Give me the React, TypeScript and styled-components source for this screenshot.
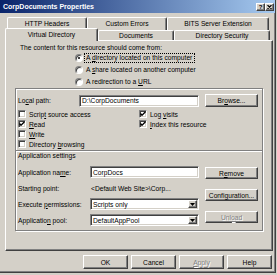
import React from "react";
import styled, { createGlobalStyle, css } from "styled-components";

const GlobalStyle = createGlobalStyle`
  html, body {
    margin: 0;
    padding: 0;
    background: #d4d0c8;
  }
  body {
    font-family: "Liberation Sans", Arial, sans-serif;
    font-size: 6.7px;
    color: #000;
  }
`;

const raised = css`
  border: 1px solid;
  border-color: #fff #404040 #404040 #fff;
  box-shadow: inset -1px -1px #808080;
`;

const sunken = css`
  border: 1px solid;
  border-color: #808080 #fff #fff #808080;
  box-shadow: inset 1px 1px #404040, inset -1px -1px #d4d0c8;
`;

const Window = styled.div`
  width: 276px;
  height: 273px;
  box-sizing: border-box;
  background: #d4d0c8;
  border-right: 1px solid #404040;
  border-bottom: 1px solid #404040;
  box-shadow: inset -1px -1px #808080;
  display: flex;
  flex-direction: column;
`;

const TitleBar = styled.div`
  height: 13px;
  flex: none;
  background: linear-gradient(to right, #0a246a, #a6caf0);
  display: flex;
  align-items: center;
  justify-content: space-between;
  padding: 0 1px 0 3px;
`;

const Title = styled.span`
  color: #fff;
  font-weight: bold;
  font-size: 7px;
`;

const CaptionButtons = styled.div`
  display: flex;
  margin-top: 1px;
`;

const CaptionButton = styled.div`
  width: 9px;
  height: 8px;
  box-sizing: border-box;
  background: #d4d0c8;
  ${raised};
  display: flex;
  align-items: center;
  justify-content: center;
  font-weight: bold;
  font-size: 6px;
  line-height: 6px;
`;

const Body = styled.div`
  display: flex;
  flex-direction: column;
  padding: 4px 2px 0 5px;
`;

const tabEdges = css`
  box-sizing: border-box;
  background: #d4d0c8;
  border-top: 1px solid #fff;
  border-left: 1px solid #fff;
  border-right: 1px solid #404040;
  box-shadow: inset -1px 0 #808080;
  border-radius: 2px 2px 0 0;
  display: flex;
  align-items: center;
  justify-content: center;
  white-space: nowrap;
`;

const BackRow = styled.div`
  display: flex;
  margin-left: 2px;
  height: 11px;
`;

const BackTab = styled.div<{ $w: number }>`
  ${tabEdges};
  width: ${(p) => p.$w}px;
  height: 13px;
  padding-bottom: 2px;
`;

const FrontRow = styled.div`
  display: flex;
  align-items: flex-start;
  height: 13px;
  margin-bottom: -1px;
`;

const FrontTab = styled.div<{ $w: number; $active?: boolean }>`
  ${tabEdges};
  width: ${(p) => p.$w}px;
  ${(p) =>
    p.$active
      ? css`
          height: 13px;
          position: relative;
          z-index: 1;
          padding-bottom: 1px;
        `
      : css`
          height: 10px;
          margin-top: 2px;
        `}
`;

const Panel = styled.div`
  box-sizing: border-box;
  height: 211px;
  border-top: 1px solid #fff;
  border-left: 1px solid #fff;
  border-right: 1px solid #404040;
  border-bottom: 1px solid #404040;
  box-shadow: inset -1px -1px #808080;
  padding: 2px 10px 0 9px;
  display: flex;
  flex-direction: column;
`;

const Intro = styled.div`
  margin-left: 5px;
  height: 9px;
  line-height: 9px;
`;

const RadioList = styled.div`
  margin-left: 60px;
  display: flex;
  flex-direction: column;
  align-items: flex-start;
`;

const RadioRow = styled.div`
  height: 12px;
  display: flex;
  align-items: center;
`;

const RadioDot = styled.span<{ $on?: boolean }>`
  width: 8px;
  height: 8px;
  flex: none;
  box-sizing: border-box;
  border-radius: 50%;
  background: #fff;
  border: 1px solid;
  border-color: #808080 #fff #fff #808080;
  box-shadow: inset 1px 1px #404040;
  display: flex;
  align-items: center;
  justify-content: center;
  &::after {
    content: "";
    width: 2px;
    height: 2px;
    border-radius: 1px;
    background: ${(p) => (p.$on ? "#000" : "transparent")};
  }
`;

const RadioLabel = styled.span<{ $focus?: boolean }>`
  margin-left: 1px;
  padding: 0 2px 0 1px;
  line-height: 8px;
  white-space: nowrap;
  border: 1px dotted ${(p) => (p.$focus ? "#000" : "transparent")};
`;

const Frame = styled.div`
  box-sizing: border-box;
  width: 248px;
  height: 143px;
  border: 1px solid #808080;
  box-shadow: inset 1px 1px #fff, 1px 1px #fff;
  padding: 5px 2px 0 2px;
  display: flex;
  flex-direction: column;
`;

const PathRow = styled.div`
  display: flex;
  align-items: center;
  height: 13px;
`;

const FieldLabel = styled.span<{ $w: number }>`
  width: ${(p) => p.$w}px;
  flex: none;
  white-space: nowrap;
`;

const TextBox = styled.div<{ $w: number }>`
  width: ${(p) => p.$w}px;
  height: 12px;
  box-sizing: border-box;
  background: #fff;
  ${sunken};
  padding-left: 2px;
  display: flex;
  align-items: center;
  white-space: nowrap;
`;

const PushButton = styled.button<{ $w: number; $h: number }>`
  width: ${(p) => p.$w}px;
  height: ${(p) => p.$h}px;
  box-sizing: border-box;
  background: #d4d0c8;
  ${raised};
  padding: 0;
  margin: 0;
  font: inherit;
  color: #000;
  display: flex;
  align-items: center;
  justify-content: center;
  white-space: nowrap;
  &:disabled {
    color: #808080;
    text-shadow: 1px 1px #fff;
  }
`;

const BrowseButton = styled(PushButton)`
  margin-left: 6px;
`;

const Checks = styled.div`
  margin-top: 2px;
  display: grid;
  grid-template-columns: 121px 1fr;
  grid-template-rows: repeat(4, 10px);
  grid-auto-flow: column;
`;

const CheckItem = styled.div`
  display: flex;
  align-items: center;
  gap: 3px;
  white-space: nowrap;
`;

const CheckBox = styled.span`
  width: 8px;
  height: 8px;
  box-sizing: border-box;
  background: #fff;
  ${sunken};
  display: flex;
  align-items: center;
  justify-content: center;
`;

const Divider = styled.div`
  margin: 1px -2px 0;
  border-top: 1px solid #808080;
  border-bottom: 1px solid #fff;
`;

const SectionTitle = styled.div`
  margin-top: 0;
  line-height: 8px;
  height: 8px;
`;

const AppArea = styled.div`
  display: flex;
  margin-top: 6px;
`;

const AppFields = styled.div`
  display: grid;
  grid-template-columns: 72px 109px;
  grid-auto-rows: 12px;
  row-gap: 4px;
  align-items: center;
`;

const AppButtons = styled.div`
  display: flex;
  flex-direction: column;
  gap: 10px;
  margin: 1px 0 0 6px;
`;

const Plain = styled.span`
  padding-left: 1px;
  white-space: nowrap;
`;

const Combo = styled.div`
  width: 109px;
  height: 12px;
  box-sizing: border-box;
  background: #fff;
  ${sunken};
  padding: 1px 1px 1px 2px;
  display: flex;
  align-items: center;
  justify-content: space-between;
`;

const ComboArrow = styled.span`
  width: 9px;
  height: 100%;
  box-sizing: border-box;
  background: #d4d0c8;
  ${raised};
  display: flex;
  align-items: center;
  justify-content: center;
`;

const ButtonBar = styled.div`
  display: flex;
  justify-content: flex-end;
  gap: 3px;
  margin-top: 4px;
  padding-right: 1px;
`;

const Check = () => (
  <svg width="6" height="6" viewBox="0 0 6 6">
    <path d="M0.5 2.5 L2 4.2 L5.5 0.8" fill="none" stroke="#000" strokeWidth="1.3" />
  </svg>
);

const Arrow = () => (
  <svg width="5" height="3" viewBox="0 0 5 3">
    <path d="M0 0 H5 L2.5 3 Z" fill="#000" />
  </svg>
);

const CloseGlyph = () => (
  <svg width="5" height="4" viewBox="0 0 5 4">
    <path d="M0.5 0 L4.5 4 M4.5 0 L0.5 4" stroke="#000" strokeWidth="1.1" />
  </svg>
);

const checks = [
  { label: <>Scrip<u>t</u> source access</>, on: false },
  { label: <><u>R</u>ead</>, on: true },
  { label: <><u>W</u>rite</>, on: false },
  { label: <>Directory <u>b</u>rowsing</>, on: false },
  { label: <>Log <u>v</u>isits</>, on: true },
  { label: <><u>I</u>ndex this resource</>, on: true },
];

export default function App() {
  return (
    <>
      <GlobalStyle />
      <Window>
        <TitleBar>
          <Title>CorpDocuments Properties</Title>
          <CaptionButtons>
            <CaptionButton>?</CaptionButton>
            <CaptionButton>
              <CloseGlyph />
            </CaptionButton>
          </CaptionButtons>
        </TitleBar>
        <Body>
          <BackRow>
            <BackTab $w={80}>HTTP Headers</BackTab>
            <BackTab $w={80}>Custom Errors</BackTab>
            <BackTab $w={102}>BITS Server Extension</BackTab>
          </BackRow>
          <FrontRow>
            <FrontTab $w={93} $active>
              Virtual Directory
            </FrontTab>
            <FrontTab $w={76}>Documents</FrontTab>
            <FrontTab $w={96}>Directory Security</FrontTab>
          </FrontRow>
          <Panel>
            <Intro>The content for this resource should come from:</Intro>
            <RadioList>
              <RadioRow>
                <RadioDot $on />
                <RadioLabel $focus>
                  A <u>d</u>irectory located on this computer
                </RadioLabel>
              </RadioRow>
              <RadioRow>
                <RadioDot />
                <RadioLabel>
                  A <u>s</u>hare located on another computer
                </RadioLabel>
              </RadioRow>
              <RadioRow>
                <RadioDot />
                <RadioLabel>
                  A redirection to a <u>U</u>RL
                </RadioLabel>
              </RadioRow>
            </RadioList>
            <Frame>
              <PathRow>
                <FieldLabel $w={61}>
                  Lo<u>c</u>al path:
                </FieldLabel>
                <TextBox $w={120}>D:\CorpDocuments</TextBox>
                <BrowseButton $w={53} $h={13}>
                  Br<u>o</u>wse...
                </BrowseButton>
              </PathRow>
              <Checks>
                {checks.map((c, i) => (
                  <CheckItem key={i} style={{ gridRow: i < 4 ? i + 1 : i - 3 }}>
                    <CheckBox>{c.on && <Check />}</CheckBox>
                    <span>{c.label}</span>
                  </CheckItem>
                ))}
              </Checks>
              <Divider />
              <SectionTitle>Application settings</SectionTitle>
              <AppArea>
                <AppFields>
                  <FieldLabel $w={72}>
                    Application na<u>m</u>e:
                  </FieldLabel>
                  <TextBox $w={109}>CorpDocs</TextBox>
                  <FieldLabel $w={72}>Starting point:</FieldLabel>
                  <Plain>&lt;Default Web Site&gt;\Corp...</Plain>
                  <FieldLabel $w={72}>
                    Execute <u>p</u>ermissions:
                  </FieldLabel>
                  <Combo>
                    <span>Scripts only</span>
                    <ComboArrow>
                      <Arrow />
                    </ComboArrow>
                  </Combo>
                  <FieldLabel $w={72}>
                    Applicatio<u>n</u> pool:
                  </FieldLabel>
                  <Combo>
                    <span>DefaultAppPool</span>
                    <ComboArrow>
                      <Arrow />
                    </ComboArrow>
                  </Combo>
                </AppFields>
                <AppButtons>
                  <PushButton $w={53} $h={12}>
                    R<u>e</u>move
                  </PushButton>
                  <PushButton $w={53} $h={12}>
                    Confi<u>g</u>uration...
                  </PushButton>
                  <PushButton $w={53} $h={12} disabled>
                    Unl<u>o</u>ad
                  </PushButton>
                </AppButtons>
              </AppArea>
            </Frame>
          </Panel>
          <ButtonBar>
            <PushButton $w={45} $h={14}>OK</PushButton>
            <PushButton $w={45} $h={14}>Cancel</PushButton>
            <PushButton $w={45} $h={14} disabled>
              <u>A</u>pply
            </PushButton>
            <PushButton $w={45} $h={14}>Help</PushButton>
          </ButtonBar>
        </Body>
      </Window>
    </>
  );
}
